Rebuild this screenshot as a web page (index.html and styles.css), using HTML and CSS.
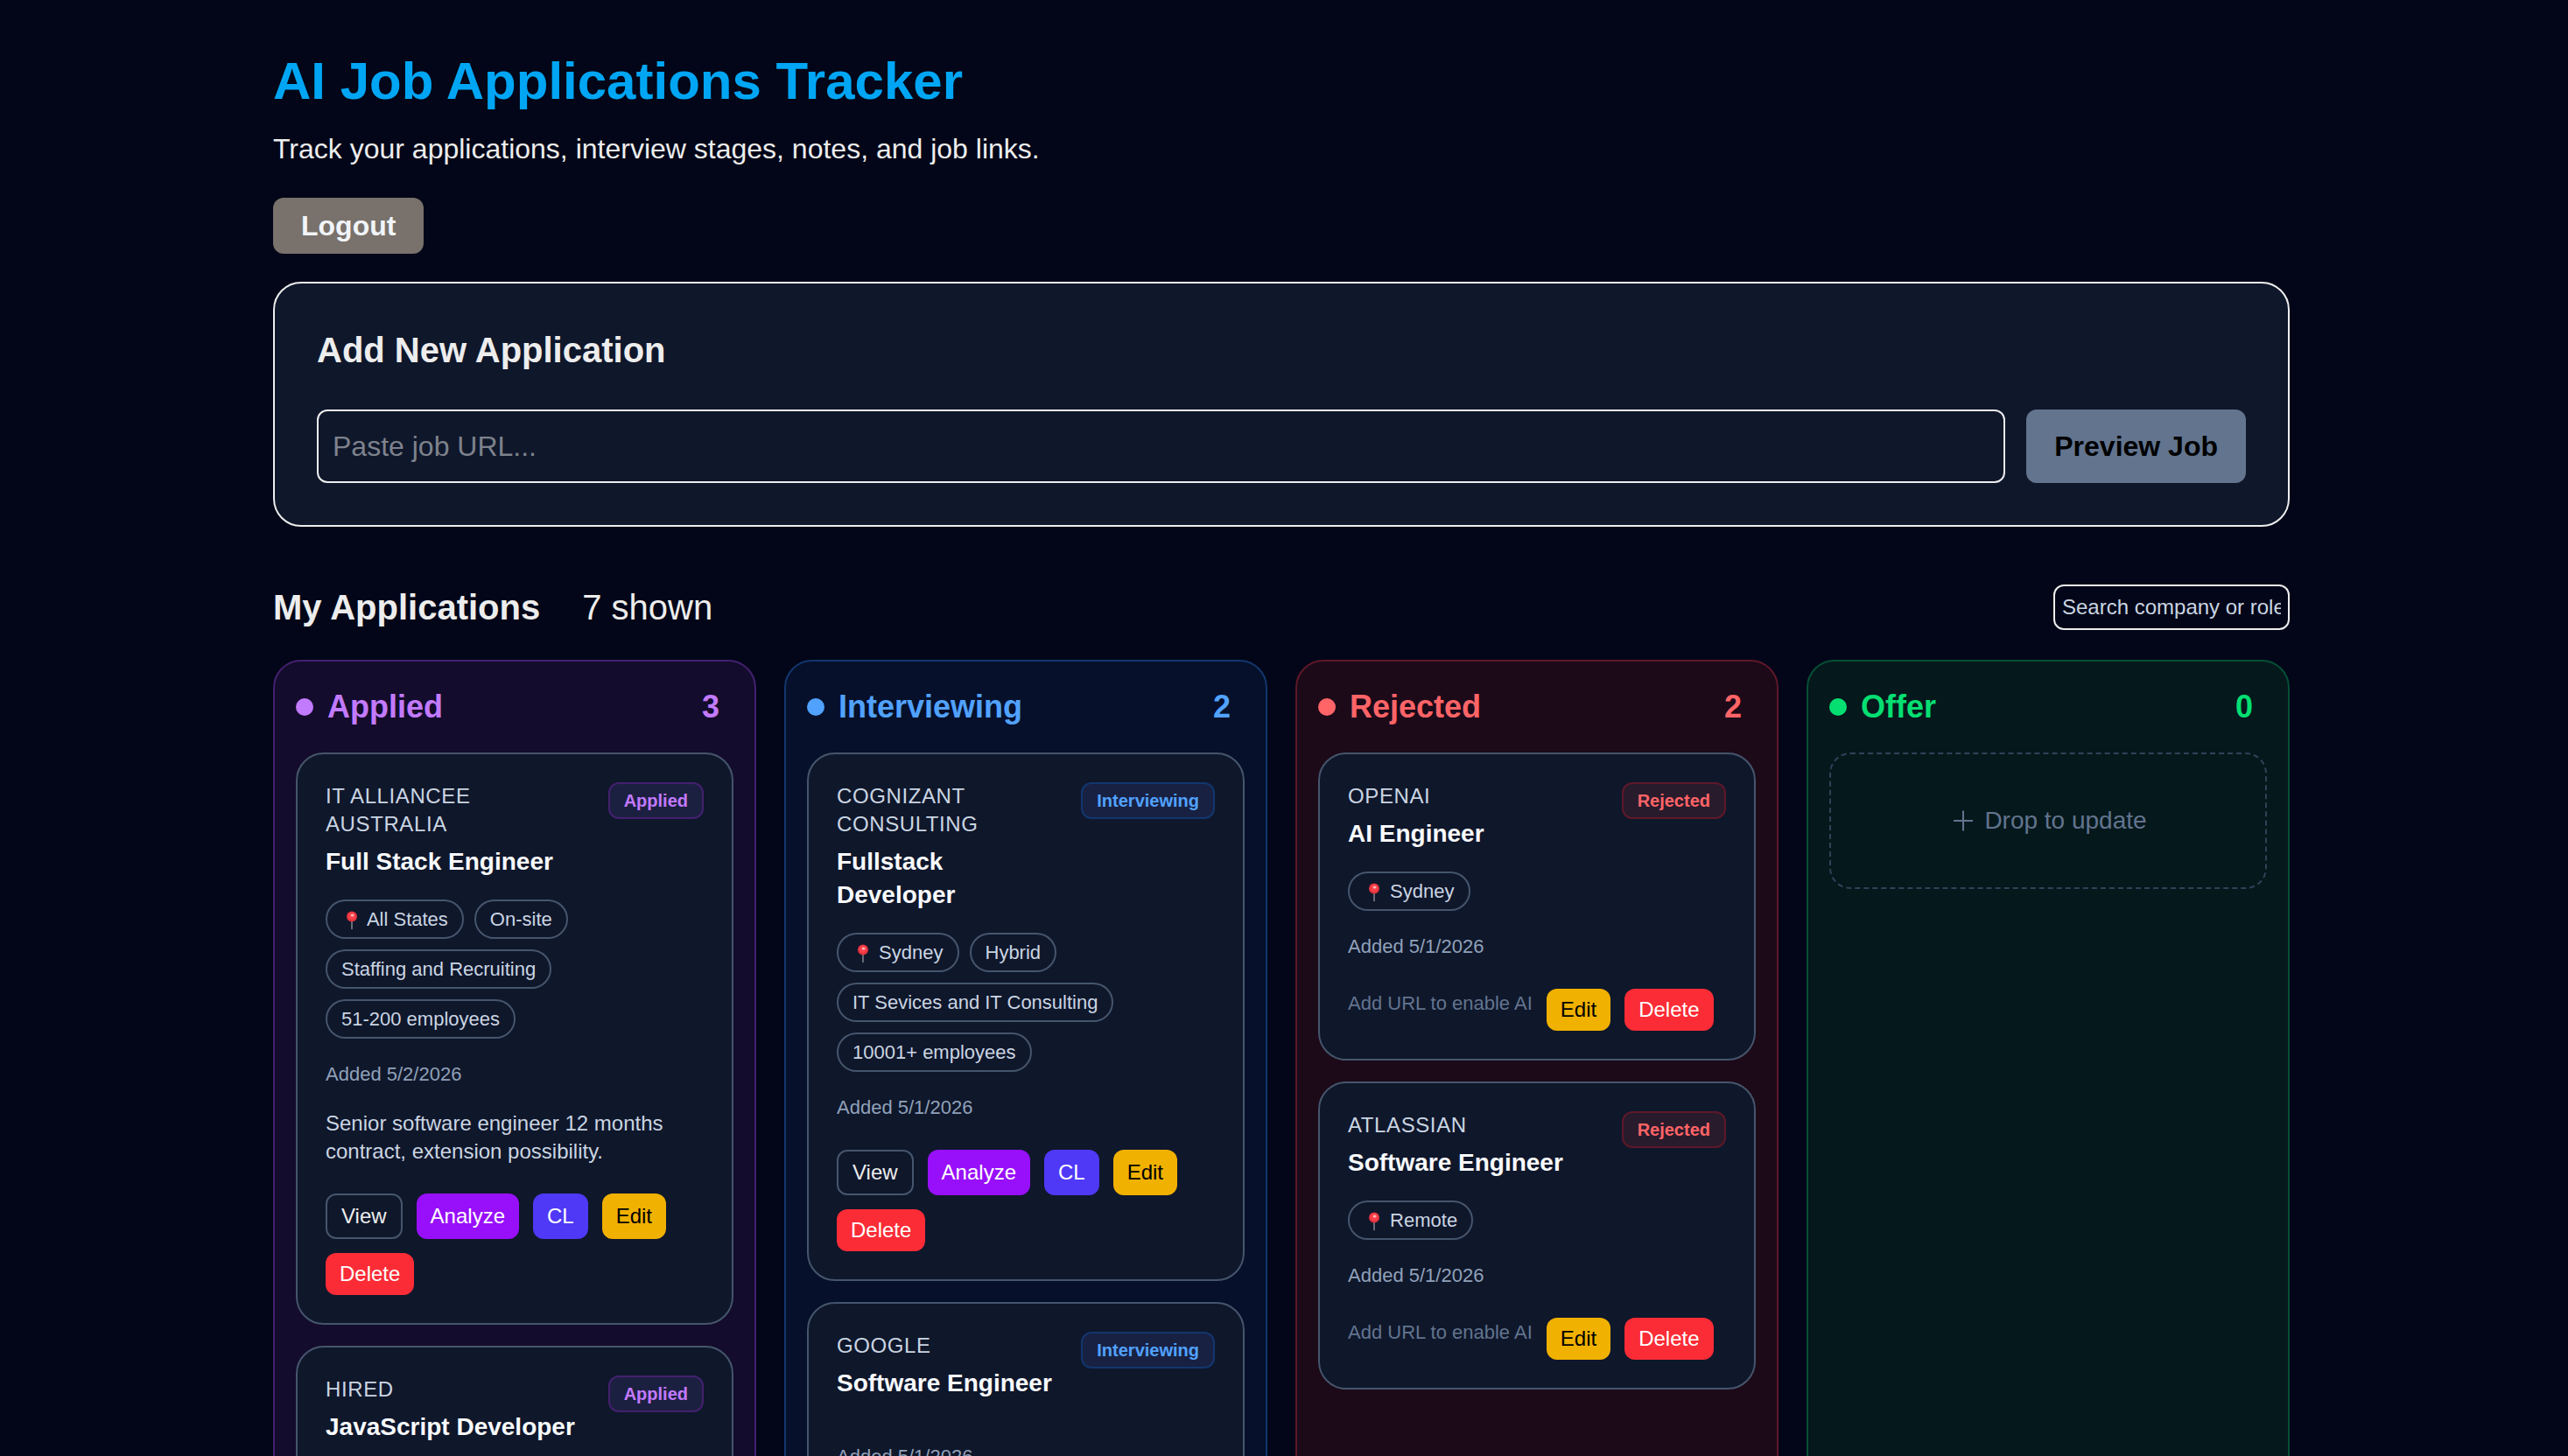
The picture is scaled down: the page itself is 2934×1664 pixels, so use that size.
FILE: index.html
```html
<!DOCTYPE html>
<html lang="en">
<head>
    <meta charset="UTF-8">
    <meta name="viewport" content="width=device-width, initial-scale=1.0">
    <title>AI Job Applications Tracker</title>
    <link rel="stylesheet" href="styles.css">
</head>
<body>
    <!-- shared icons -->
    <svg class="sprite" aria-hidden="true">
        <symbol id="pin" viewBox="0 0 24 22">
            <path d="M12 11V20.5" stroke="#7d8087" stroke-width="1.6" stroke-linecap="round"/>
            <circle cx="12" cy="6.5" r="6" fill="#e0323c"/>
            <circle cx="12" cy="5.9" r="4.4" fill="#f9414b"/>
            <ellipse cx="12.6" cy="5.1" rx="2" ry="1.5" fill="#ffb3b3"/>
        </symbol>
        <symbol id="plus" viewBox="0 0 28 28">
            <path d="M16 2.5V25.5M5 14H27" stroke="currentColor" stroke-width="2" fill="none"/>
        </symbol>
    </svg>

    <main class="page">
        <div class="container">
            <header>
                <h1>AI Job Applications Tracker</h1>
                <p class="subtitle">Track your applications, interview stages, notes, and job links.</p>
                <button type="button" class="logout">Logout</button>
            </header>

            <section class="panel">
                <h2>Add New Application</h2>
                <form class="url-form">
                    <input type="url" class="url-input" placeholder="Paste job URL..." aria-label="Job URL">
                    <button type="submit" class="preview">Preview Job</button>
                </form>
            </section>

            <div class="toolbar">
                <h2>My Applications</h2>
                <span class="shown">7 shown</span>
                <input type="text" class="search" placeholder="Search company or role..." aria-label="Search company or role">
            </div>

            <div class="board">
                <section class="column applied">
                    <div class="column-header">
                        <span class="dot"></span>
                        <h3>Applied</h3>
                        <span class="count">3</span>
                    </div>

                    <article class="card">
                        <div class="card-top">
                            <div>
                                <p class="company">IT Alliancee Australia</p>
                                <h4>Full Stack Engineer</h4>
                            </div>
                            <span class="badge">Applied</span>
                        </div>
                        <div class="chips">
                            <span class="chip"><svg class="pin"><use href="#pin"/></svg> All States</span>
                            <span class="chip">On-site</span>
                            <span class="chip">Staffing and Recruiting</span>
                            <span class="chip">51-200 employees</span>
                        </div>
                        <p class="added">Added 5/2/2026</p>
                        <p class="notes">Senior software engineer 12 months contract, extension possibility.</p>
                        <div class="actions">
                            <a href="#" class="btn view">View</a>
                            <button type="button" class="btn analyze">Analyze</button>
                            <button type="button" class="btn letter">CL</button>
                            <button type="button" class="btn edit">Edit</button>
                            <button type="button" class="btn delete">Delete</button>
                        </div>
                    </article>

                    <article class="card">
                        <div class="card-top">
                            <div>
                                <p class="company">Hired</p>
                                <h4>JavaScript Developer</h4>
                            </div>
                            <span class="badge">Applied</span>
                        </div>
                        <div class="chips"></div>
                        <div class="actions">
                            <button type="button" class="btn edit">Edit</button>
                            <button type="button" class="btn delete">Delete</button>
                        </div>
                    </article>
                </section>

                <section class="column interviewing">
                    <div class="column-header">
                        <span class="dot"></span>
                        <h3>Interviewing</h3>
                        <span class="count">2</span>
                    </div>

                    <article class="card">
                        <div class="card-top">
                            <div>
                                <p class="company">Cognizant Consulting</p>
                                <h4>Fullstack Developer</h4>
                            </div>
                            <span class="badge">Interviewing</span>
                        </div>
                        <div class="chips">
                            <span class="chip"><svg class="pin"><use href="#pin"/></svg> Sydney</span>
                            <span class="chip">Hybrid</span>
                            <span class="chip">IT Sevices and IT Consulting</span>
                            <span class="chip">10001+ employees</span>
                        </div>
                        <p class="added">Added 5/1/2026</p>
                        <div class="actions">
                            <a href="#" class="btn view">View</a>
                            <button type="button" class="btn analyze">Analyze</button>
                            <button type="button" class="btn letter">CL</button>
                            <button type="button" class="btn edit">Edit</button>
                            <button type="button" class="btn delete">Delete</button>
                        </div>
                    </article>

                    <article class="card">
                        <div class="card-top">
                            <div>
                                <p class="company">Google</p>
                                <h4>Software Engineer</h4>
                            </div>
                            <span class="badge">Interviewing</span>
                        </div>
                        <div class="chips"></div>
                        <p class="added">Added 5/1/2026</p>
                    </article>
                </section>

                <section class="column rejected">
                    <div class="column-header">
                        <span class="dot"></span>
                        <h3>Rejected</h3>
                        <span class="count">2</span>
                    </div>

                    <article class="card">
                        <div class="card-top">
                            <div>
                                <p class="company">OpenAI</p>
                                <h4>AI Engineer</h4>
                            </div>
                            <span class="badge">Rejected</span>
                        </div>
                        <div class="chips">
                            <span class="chip"><svg class="pin"><use href="#pin"/></svg> Sydney</span>
                        </div>
                        <p class="added">Added 5/1/2026</p>
                        <div class="actions">
                            <span class="hint">Add URL to enable AI</span>
                            <button type="button" class="btn edit">Edit</button>
                            <button type="button" class="btn delete">Delete</button>
                        </div>
                    </article>

                    <article class="card">
                        <div class="card-top">
                            <div>
                                <p class="company">Atlassian</p>
                                <h4>Software Engineer</h4>
                            </div>
                            <span class="badge">Rejected</span>
                        </div>
                        <div class="chips">
                            <span class="chip"><svg class="pin"><use href="#pin"/></svg> Remote</span>
                        </div>
                        <p class="added">Added 5/1/2026</p>
                        <div class="actions">
                            <span class="hint">Add URL to enable AI</span>
                            <button type="button" class="btn edit">Edit</button>
                            <button type="button" class="btn delete">Delete</button>
                        </div>
                    </article>
                </section>

                <section class="column offer">
                    <div class="column-header">
                        <span class="dot"></span>
                        <h3>Offer</h3>
                        <span class="count">0</span>
                    </div>
                    <div class="dropzone">
                        <svg class="plus"><use href="#plus"/></svg>
                        Drop to update
                    </div>
                </section>
            </div>
        </div>
    </main>
</body>
</html>
```

FILE: styles.css
```css
* {
    box-sizing: border-box;
    margin: 0;
    padding: 0;
}

body {
    font-family: "Liberation Sans", Arial, sans-serif;
    font-size: 32px;
    line-height: 48px;
    color: #ededed;
    background-color: #020618;
}

button, input {
    font: inherit;
    color: inherit;
}

button {
    border: none;
    cursor: pointer;
}

.sprite {
    display: none;
}

.page {
    height: 100vh;
    overflow: hidden auto;
    padding: 48px 54px 48px 48px;
    scrollbar-width: none;
}

.container {
    max-width: 2304px;
    margin: 0 auto;
}

/* header */

h1 {
    font-size: 60px;
    line-height: 90px;
    color: #00a6f4;
}

.subtitle {
    margin-top: 8px;
}

.logout {
    display: block;
    margin-top: 32px;
    padding: 8px 32px;
    font-weight: bold;
    color: #f1f5f9;
    background-color: #79716b;
    border-radius: 12px;
}

h2 {
    font-size: 40px;
    line-height: 56px;
}

/* add form */

.panel {
    margin-top: 32px;
    padding: 48px;
    background-color: #0f172b;
    border: 2px solid #ededed;
    border-radius: 32px;
}

.url-form {
    display: flex;
    gap: 24px;
    margin-top: 40px;
}

.url-input {
    flex: 1;
    min-width: 0;
    height: 84px;
    padding: 16px;
    background: transparent;
    border: 2px solid #ededed;
    border-radius: 12px;
}

.url-input::placeholder {
    color: #7e828c;
}

.preview {
    padding: 16px 32px;
    font-weight: bold;
    color: #000;
    background-color: #62748e;
    border-radius: 12px;
}

/* list toolbar */

.toolbar {
    display: flex;
    align-items: center;
    margin-top: 64px;
}

.shown {
    margin-left: 48px;
    font-size: 40px;
    line-height: 56px;
}

.search {
    width: 270px;
    height: 52px;
    margin-left: auto;
    padding: 8px;
    font-size: 24px;
    line-height: 32px;
    background: transparent;
    border: 2px solid #ededed;
    border-radius: 12px;
}

.search::placeholder {
    color: #cad5e2;
}

/* board */

.board {
    display: grid;
    grid-template-columns: repeat(4, 1fr);
    gap: 32px;
    margin-top: 32px;
}

.column {
    display: flex;
    flex-direction: column;
    gap: 24px;
    padding: 24px;
    background-color: var(--fill);
    border: 2px solid var(--line);
    border-radius: 32px;
}

.applied {
    --tone: #c27aff;
    --fill: #140c2c;
    --line: #43206f;
    --badge: #1c2040;
}

.interviewing {
    --tone: #51a2ff;
    --fill: #06102a;
    --line: #12366e;
    --badge: #182142;
}

.rejected {
    --tone: #ff6467;
    --fill: #1c0a19;
    --line: #5e1829;
    --badge: #281b2c;
}

.offer {
    --tone: #05df72;
    --fill: #05181c;
    --line: #054f35;
}

.column-header {
    display: flex;
    align-items: center;
    gap: 16px;
    padding-right: 16px;
    font-size: 36px;
    line-height: 56px;
    font-weight: bold;
    color: var(--tone);
}

.column-header h3 {
    font-size: 36px;
}

.dot {
    width: 20px;
    height: 20px;
    border-radius: 50%;
    background-color: currentColor;
}

.count {
    margin-left: auto;
}

/* cards */

.card {
    padding: 32px;
    background-color: #0f172b;
    border: 2px solid #45556c;
    border-radius: 32px;
}

.card-top {
    display: flex;
    justify-content: space-between;
    align-items: flex-start;
    gap: 24px;
}

.company {
    font-size: 24px;
    line-height: 32px;
    letter-spacing: 0.025em;
    text-transform: uppercase;
    color: #cad5e2;
}

h4 {
    margin-top: 8px;
    font-size: 28px;
    line-height: 38px;
    color: #f8fafc;
}

.badge {
    flex-shrink: 0;
    padding: 4px 16px;
    font-size: 20px;
    line-height: 30px;
    font-weight: bold;
    color: var(--tone);
    background-color: var(--badge);
    border: 2px solid var(--line);
    border-radius: 12px;
}

.chips {
    display: flex;
    flex-wrap: wrap;
    gap: 12px;
    margin-top: 24px;
}

.chip {
    padding: 4px 16px;
    font-size: 22px;
    line-height: 33px;
    color: #cad5e2;
    border: 2px solid #45556c;
    border-radius: 24px;
}

.pin {
    width: 24px;
    height: 22px;
    vertical-align: text-bottom;
}

.added {
    margin-top: 24px;
    font-size: 22px;
    line-height: 33px;
    color: #90a1b9;
}

.notes {
    margin-top: 24px;
    font-size: 24px;
    line-height: 32px;
    color: #cad5e2;
}

.actions {
    display: flex;
    flex-wrap: wrap;
    gap: 16px;
    margin-top: 32px;
}

.btn {
    padding: 8px 16px;
    font-size: 24px;
    line-height: 32px;
    color: #fff;
    border-radius: 12px;
}

.view {
    color: #ededed;
    text-decoration: none;
    border: 2px solid #45556c;
}

.analyze {
    background-color: #9810fa;
}

.letter {
    background-color: #4f39f6;
}

.edit {
    color: #000;
    background-color: #f0b100;
}

.delete {
    background-color: #fb2c36;
}

.hint {
    font-size: 22px;
    line-height: 33px;
    color: #62748e;
}

.dropzone {
    display: flex;
    justify-content: center;
    align-items: center;
    gap: 12px;
    padding: 56px 24px;
    font-size: 28px;
    line-height: 40px;
    color: #62748e;
    border: 2px dashed #314158;
    border-radius: 24px;
}

.plus {
    width: 28px;
    height: 28px;
}
```
